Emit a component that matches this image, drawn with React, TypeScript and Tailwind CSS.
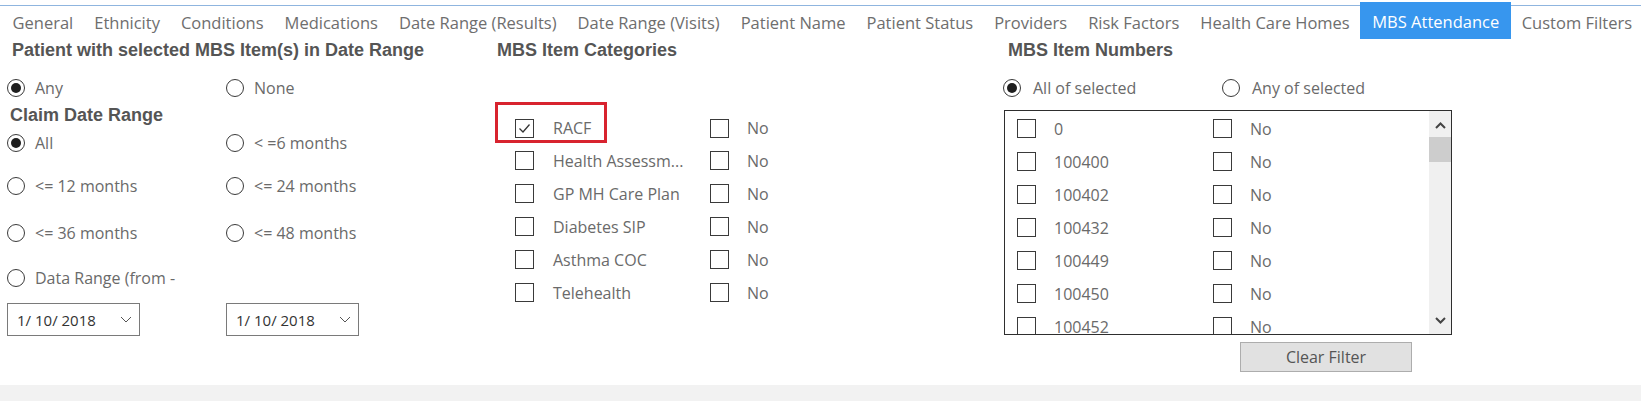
const tabs = [
  "General",
  "Ethnicity",
  "Conditions",
  "Medications",
  "Date Range (Results)",
  "Date Range (Visits)",
  "Patient Name",
  "Patient Status",
  "Providers",
  "Risk Factors",
  "Health Care Homes",
  "MBS Attendance",
  "Custom Filters",
];

const categories = [
  "RACF",
  "Health Assessm...",
  "GP MH Care Plan",
  "Diabetes SIP",
  "Asthma COC",
  "Telehealth",
];

const items = ["0", "100400", "100402", "100432", "100449", "100450", "100452"];

const headFont = { fontFamily: '"Liberation Sans", Arial, sans-serif' };

function Radio({ checked = false }: { checked?: boolean }) {
  return (
    <span className="flex h-[18px] w-[18px] shrink-0 items-center justify-center rounded-full border border-[#3a3a3a] bg-white">
      {checked && <span className="h-[10px] w-[10px] rounded-full bg-[#1e1e1e]" />}
    </span>
  );
}

function Check({ checked = false }: { checked?: boolean }) {
  return (
    <span className="flex h-[19px] w-[19px] shrink-0 items-center justify-center border border-[#3a3a3a] bg-white">
      {checked && (
        <svg width="13" height="13" viewBox="0 0 13 13">
          <path d="M1.5 6.5 L5 10 L11.5 2.5" fill="none" stroke="#333" strokeWidth="1.3" />
        </svg>
      )}
    </span>
  );
}

function RadioLabel({ label, checked }: { label: string; checked?: boolean }) {
  return (
    <label className="flex h-[22px] items-center gap-[10px] whitespace-nowrap">
      <Radio checked={checked} />
      <span>{label}</span>
    </label>
  );
}

function Heading({ children }: { children: string }) {
  return (
    <div
      className="h-[22px] whitespace-nowrap text-[18px] font-bold leading-[22px] text-[#555]"
      style={headFont}
    >
      {children}
    </div>
  );
}

function DateBox() {
  return (
    <div className="flex h-[33px] w-[133px] items-center justify-between border border-[#7a7a7a] pl-[9px] pr-[7px] text-[15px] text-[#333]">
      <span>1/ 10/ 2018</span>
      <svg width="12" height="7" viewBox="0 0 12 7">
        <path d="M1 1 L6 6 L11 1" fill="none" stroke="#555" strokeWidth="1" />
      </svg>
    </div>
  );
}

export default function App() {
  return (
    <div
      className="flex h-[401px] w-[1641px] flex-col overflow-hidden bg-white text-[16px] leading-[22px] text-[#6a6a6a]"
      style={{ fontFamily: '"Open Sans", "Noto Sans", sans-serif' }}
    >
      {/* tab strip */}
      <div className="mt-[5px] flex h-[34px] shrink-0 items-stretch border-t border-[#8fb5df] pl-[2px] text-[16.5px]">
        {tabs.map((t) =>
          t === "MBS Attendance" ? (
            <div
              key={t}
              className="-mt-[4px] flex items-center whitespace-nowrap bg-[#3796ee] px-[12px] pt-[2px] text-white"
            >
              {t}
            </div>
          ) : (
            <div key={t} className="flex items-center whitespace-nowrap px-[10.5px] text-[#6e6e6e]">
              {t}
            </div>
          )
        )}
      </div>

      <div className="flex">
        {/* left column */}
        <div className="w-[495px] shrink-0 pl-[7px]">
          <div className="ml-[5px]">
            <Heading>Patient with selected MBS Item(s) in Date Range</Heading>
          </div>
          <div className="mt-[16px] grid grid-cols-[219px_1fr]">
            <RadioLabel label="Any" checked />
            <RadioLabel label="None" />
          </div>
          <div className="ml-[3px] mt-[5px]">
            <Heading>Claim Date Range</Heading>
          </div>
          <div className="mt-[6px] grid grid-cols-[219px_1fr]">
            <RadioLabel label="All" checked />
            <RadioLabel label="< =6 months" />
          </div>
          <div className="mt-[21px] grid grid-cols-[219px_1fr]">
            <RadioLabel label="<= 12 months" />
            <RadioLabel label="<= 24 months" />
          </div>
          <div className="mt-[25px] grid grid-cols-[219px_1fr]">
            <RadioLabel label="<= 36 months" />
            <RadioLabel label="<= 48 months" />
          </div>
          <div className="mt-[23px]">
            <RadioLabel label="Data Range (from -" />
          </div>
          <div className="mt-[14px] grid grid-cols-[219px_1fr]">
            <DateBox />
            <DateBox />
          </div>
        </div>

        {/* middle column */}
        <div className="w-[508px] shrink-0">
          <div className="ml-[2px]">
            <Heading>MBS Item Categories</Heading>
          </div>
          <div className="mt-[41px] flex flex-col">
            {categories.map((c, i) =>
              i === 0 ? (
                <div key={c} className="flex h-[42px] items-start">
                  <div className="flex h-[41px] w-[215px] items-start">
                    <div className="flex h-[41px] w-[112px] items-start gap-[19px] border-[3px] border-[#d8232f] pl-[17px] pt-[14px]">
                      <Check checked />
                      <span className="leading-[19px]">{c}</span>
                    </div>
                  </div>
                  <div className="mt-[17px] flex items-center gap-[18px]">
                    <Check />
                    <span className="leading-[19px]">No</span>
                  </div>
                </div>
              ) : (
                <div key={c} className="flex h-[33px] items-center">
                  <div className="flex w-[215px] items-center gap-[19px] pl-[20px]">
                    <Check />
                    <span className="whitespace-nowrap">{c}</span>
                  </div>
                  <div className="flex items-center gap-[18px]">
                    <Check />
                    <span>No</span>
                  </div>
                </div>
              )
            )}
          </div>
        </div>

        {/* right column */}
        <div className="flex-1">
          <div className="ml-[5px]">
            <Heading>MBS Item Numbers</Heading>
          </div>
          <div className="mt-[16px] grid w-[420px] grid-cols-[219px_1fr] [&_label]:gap-[12px]">
            <RadioLabel label="All of selected" checked />
            <RadioLabel label="Any of selected" />
          </div>
          <div className="ml-px mt-[11px] flex h-[225px] w-[448px] border-[1.5px] border-[#2e2e2e]">
            <div className="flex-1 overflow-hidden pl-[12px] pt-[1px]">
              {items.map((n) => (
                <div key={n} className="flex h-[33px] shrink-0 items-center">
                  <div className="flex w-[196px] items-center gap-[18px]">
                    <Check />
                    <span>{n}</span>
                  </div>
                  <div className="flex items-center gap-[18px]">
                    <Check />
                    <span>No</span>
                  </div>
                </div>
              ))}
            </div>
            <div className="flex w-[22px] flex-col items-center justify-between bg-[#f0f0f0] pb-[10px] pt-[11px]">
              <div className="flex w-full flex-col items-center">
                <svg width="11" height="7" viewBox="0 0 11 7">
                  <path d="M1 6 L5.5 1.5 L10 6" fill="none" stroke="#444" strokeWidth="2" />
                </svg>
                <div className="mt-[8px] h-[25px] w-full bg-[#cdcdcd]" />
              </div>
              <svg width="11" height="7" viewBox="0 0 11 7">
                <path d="M1 1 L5.5 5.5 L10 1" fill="none" stroke="#444" strokeWidth="2" />
              </svg>
            </div>
          </div>
          <div className="ml-[237px] mt-[7px] flex h-[30px] w-[172px] items-center justify-center border border-[#adadad] bg-[#e1e1e1] text-[#555]">
            Clear Filter
          </div>
        </div>
      </div>

      <div className="mt-auto h-[16px] shrink-0 bg-[#f2f2f2]" />
    </div>
  );
}
